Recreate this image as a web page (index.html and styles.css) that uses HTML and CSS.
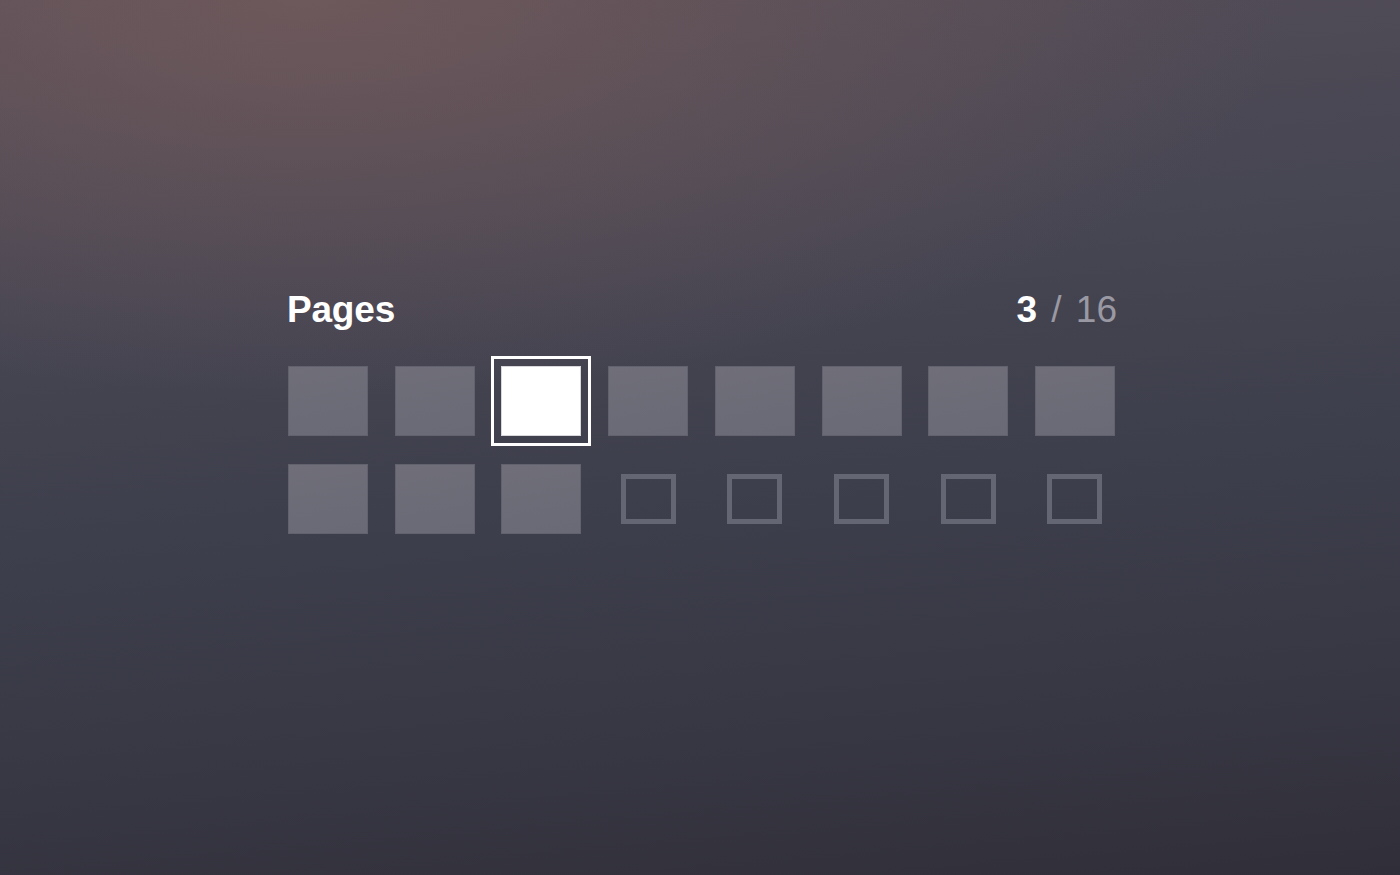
FILE: index.html
```html
<!DOCTYPE html>
<html lang="en">
<head>
    <meta charset="UTF-8">
    <title>Pages</title>
    <link rel="stylesheet" href="styles.css">
</head>
<body>
    <div class="pager">
        <div class="pager-head">
            <h2>Pages</h2>
            <div class="count"><b>3</b> <span class="slash">/</span> 16</div>
        </div>

        <div class="grid">
            <div class="page"></div>
            <div class="page"></div>
            <div class="page current"></div>
            <div class="page"></div>
            <div class="page"></div>
            <div class="page"></div>
            <div class="page"></div>
            <div class="page"></div>

            <div class="page"></div>
            <div class="page"></div>
            <div class="page"></div>
            <div class="page empty"></div>
            <div class="page empty"></div>
            <div class="page empty"></div>
            <div class="page empty"></div>
            <div class="page empty"></div>
        </div>
    </div>
</body>
</html>
```

FILE: styles.css
```css
html {
    height: 100%;
}

body {
    margin: 0;
    height: 875px;
    overflow: hidden;
    font-family: 'Liberation Sans', Arial, sans-serif;
    color: #fff;
    background:
        radial-gradient(ellipse 70% 45% at 22% 0%, rgba(118, 92, 92, 0.75), rgba(118, 92, 92, 0) 100%),
        linear-gradient(175deg, #544d58 0%, #474653 30%, #3e3f4c 55%, #393946 75%, #302f39 100%);
}

.pager {
    width: 827px;
    margin: 0 auto;
    padding: 290px 0 0 3px;
}

.pager-head {
    display: flex;
    justify-content: space-between;
    align-items: baseline;
    height: 40px;
    margin-left: -1px;
    margin-right: -2px;
}

.pager-head h2 {
    margin: 0;
    font-size: 37px;
    line-height: 40px;
    font-weight: 700;
    letter-spacing: -0.2px;
}

.count {
    font-size: 37px;
    line-height: 40px;
    color: #9a99a3;
}

.count b {
    color: #fff;
}

.count .slash {
    margin: 0 4px;
}

.grid {
    margin-top: 36px;
    display: grid;
    grid-template-columns: repeat(8, 80px);
    justify-content: space-between;
    row-gap: 28px;
}

.page {
    box-sizing: border-box;
    width: 80px;
    height: 70px;
    background: linear-gradient(170deg, #6f6e79, #696a76);
    border: 1px solid #62626f;
}

.page.current {
    background: #fff;
    border-color: #d8d8dc;
    outline: 3px solid #fff;
    outline-offset: 7px;
}

.page.empty {
    background: transparent;
    border: none;
    display: flex;
    align-items: center;
    justify-content: center;
}

.page.empty::before {
    content: "";
    box-sizing: border-box;
    width: 55px;
    height: 50px;
    border: 5px solid #656673;
}
```
